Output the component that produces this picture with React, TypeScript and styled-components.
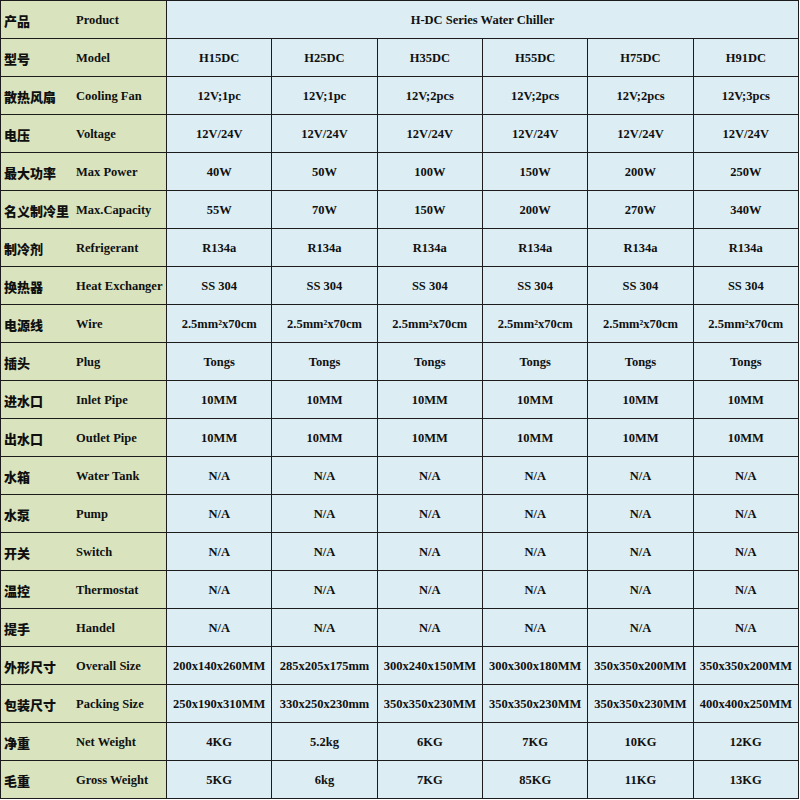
import styled, { createGlobalStyle } from 'styled-components';

const GlobalStyle = createGlobalStyle`
  html, body {
    margin: 0;
    padding: 0;
    background: #ffffff;
  }
`;

interface Spec {
  cn: string;
  en: string;
  values: string[];
}

const specs: Spec[] = [
  { cn: '型号', en: 'Model', values: ['H15DC', 'H25DC', 'H35DC', 'H55DC', 'H75DC', 'H91DC'] },
  { cn: '散热风扇', en: 'Cooling Fan', values: ['12V;1pc', '12V;1pc', '12V;2pcs', '12V;2pcs', '12V;2pcs', '12V;3pcs'] },
  { cn: '电压', en: 'Voltage', values: ['12V/24V', '12V/24V', '12V/24V', '12V/24V', '12V/24V', '12V/24V'] },
  { cn: '最大功率', en: 'Max Power', values: ['40W', '50W', '100W', '150W', '200W', '250W'] },
  { cn: '名义制冷里', en: 'Max.Capacity', values: ['55W', '70W', '150W', '200W', '270W', '340W'] },
  { cn: '制冷剂', en: 'Refrigerant', values: ['R134a', 'R134a', 'R134a', 'R134a', 'R134a', 'R134a'] },
  { cn: '换热器', en: 'Heat Exchanger', values: ['SS 304', 'SS 304', 'SS 304', 'SS 304', 'SS 304', 'SS 304'] },
  { cn: '电源线', en: 'Wire', values: Array(6).fill('2.5mm²x70cm') },
  { cn: '插头', en: 'Plug', values: Array(6).fill('Tongs') },
  { cn: '进水口', en: 'Inlet Pipe', values: Array(6).fill('10MM') },
  { cn: '出水口', en: 'Outlet Pipe', values: Array(6).fill('10MM') },
  { cn: '水箱', en: 'Water Tank', values: Array(6).fill('N/A') },
  { cn: '水泵', en: 'Pump', values: Array(6).fill('N/A') },
  { cn: '开关', en: 'Switch', values: Array(6).fill('N/A') },
  { cn: '温控', en: 'Thermostat', values: Array(6).fill('N/A') },
  { cn: '提手', en: 'Handel', values: Array(6).fill('N/A') },
  {
    cn: '外形尺寸',
    en: 'Overall Size',
    values: ['200x140x260MM', '285x205x175mm', '300x240x150MM', '300x300x180MM', '350x350x200MM', '350x350x200MM'],
  },
  {
    cn: '包装尺寸',
    en: 'Packing Size',
    values: ['250x190x310MM', '330x250x230mm', '350x350x230MM', '350x350x230MM', '350x350x230MM', '400x400x250MM'],
  },
  { cn: '净重', en: 'Net Weight', values: ['4KG', '5.2kg', '6KG', '7KG', '10KG', '12KG'] },
  { cn: '毛重', en: 'Gross Weight', values: ['5KG', '6kg', '7KG', '85KG', '11KG', '13KG'] },
];

const App = () => {
  return (
    <>
      <GlobalStyle />
      <SpecTable>
        <colgroup>
          <col style={{ width: 166 }} />
          <col />
          <col />
          <col />
          <col />
          <col />
          <col />
        </colgroup>
        <tbody>
          <tr>
            <LabelCell>
              <Label>
                <span className='cn'>产品</span>
                <span className='en'>Product</span>
              </Label>
            </LabelCell>
            <ValueCell colSpan={6}>H-DC Series Water Chiller</ValueCell>
          </tr>
          {specs.map((spec) => (
            <tr key={spec.en}>
              <LabelCell>
                <Label>
                  <span className='cn'>{spec.cn}</span>
                  <span className='en'>{spec.en}</span>
                </Label>
              </LabelCell>
              {spec.values.map((v, i) => (
                <ValueCell key={i}>{v}</ValueCell>
              ))}
            </tr>
          ))}
        </tbody>
      </SpecTable>
    </>
  );
};

const SpecTable = styled.table`
  width: 799px;
  table-layout: fixed;
  border-collapse: collapse;
  font-family: 'Liberation Serif', 'Times New Roman', serif;
  font-weight: bold;
  font-size: 12.5px;
  color: #101010;

  td {
    height: 38px;
    padding: 1px 0 0;
    border: 1px solid #1c1c1c;
    box-sizing: border-box;
  }
`;

const LabelCell = styled.td`
  background-color: #d9e4bf;
`;

const Label = styled.div`
  display: flex;
  align-items: center;
  padding-left: 3px;

  .cn {
    width: 72px;
    font-family: 'Noto Sans CJK SC', sans-serif;
    font-size: 13px;
    font-weight: 900;
  }

  .en {
    white-space: nowrap;
  }
`;

const ValueCell = styled.td`
  background-color: #dcedf3;
  text-align: center;
  white-space: nowrap;
`;

export default App;
